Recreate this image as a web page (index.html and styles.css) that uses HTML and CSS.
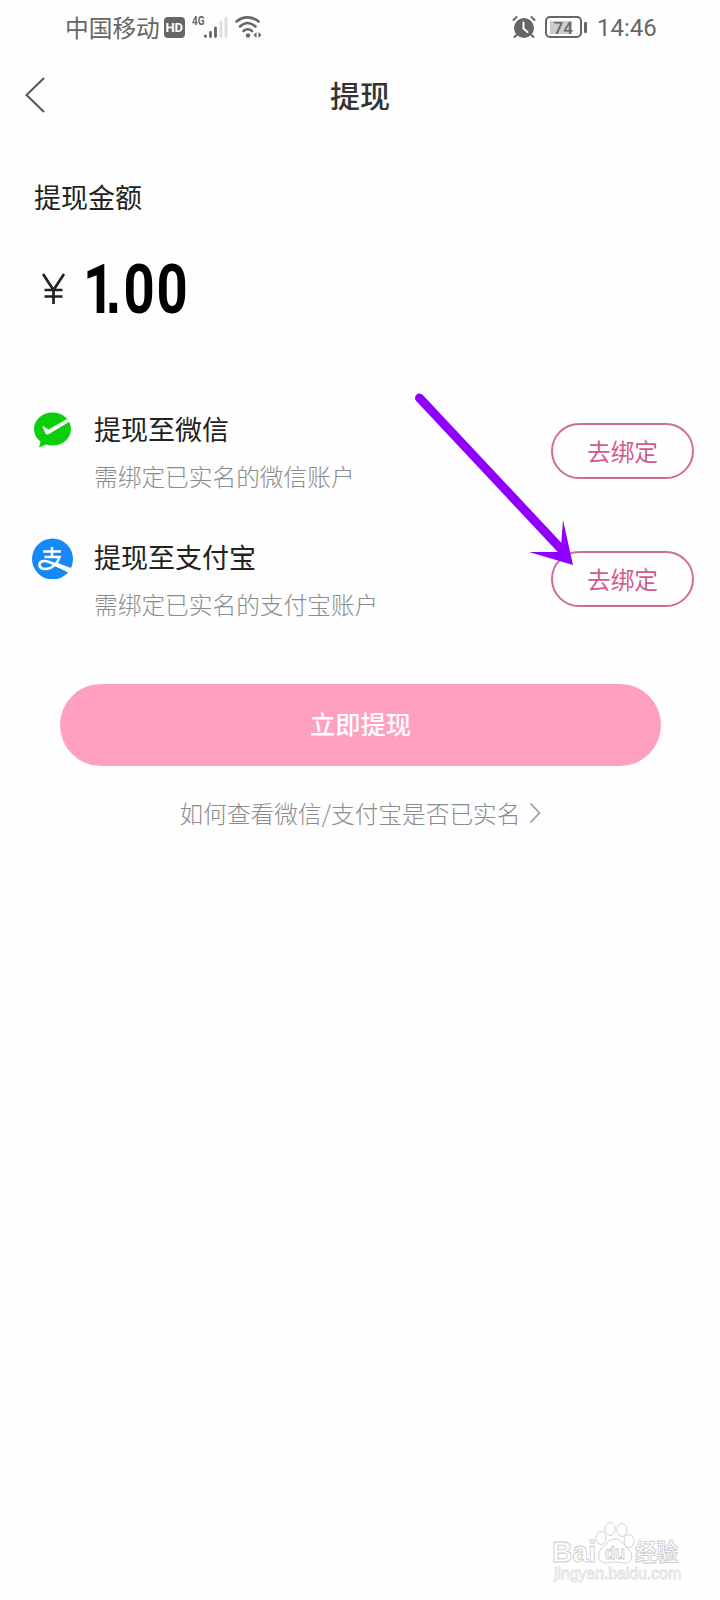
FILE: index.html
```html
<!DOCTYPE html>
<html lang="zh-CN">
<head>
<meta charset="utf-8">
<title>提现</title>
<link rel="stylesheet" href="styles.css">
</head>
<body>
<div class="screen">
  <header class="status">
    <span class="carrier">中国移动</span>
    <span class="hd">HD</span>
    <svg class="signal" width="38" height="26" viewBox="0 0 38 26">
      <text class="net" x="0" y="11" textLength="12.500" lengthAdjust="spacingAndGlyphs">4G</text>
      <g stroke-width="2.800" stroke-linecap="round" stroke="#666"><path d="M13.500 22v.5M18.500 18.500v4M23.500 14v8.500"/><path stroke="#ddd" d="M29 8v14.500M34 4v18.500"/></g>
    </svg>
    <svg class="wifi" width="30" height="26" viewBox="0 0 30 26" fill="none" stroke="#666" stroke-width="2.600" stroke-linecap="round">
      <path d="M2.500 7.500C9 2 18 2 24.500 7.500M6 12.500C11 8 16.500 8 21.500 12.500M9.500 17C12.500 14.500 15 14.500 18 17"/>
      <circle cx="14" cy="21.500" r="2.200" fill="#666" stroke="none"/>
      <path d="M22.500 18v6l-3-3zM24.500 18v6l3-3z" fill="#666" stroke="none"/>
    </svg>
    <svg class="alarm" width="24" height="24" viewBox="0 0 24 24" fill="none" stroke="#666" stroke-width="2" stroke-linecap="round">
      <circle cx="12" cy="13" r="10" fill="#666" stroke="none"/>
      <path d="M1.500 5L4.500 2M19.500 2L22.500 5M4.500 20L2.500 22M19.500 20L21.500 22"/>
      <path stroke="#fff" d="M11.500 7.500V13.500L15.500 17"/>
    </svg>
    <span class="battery"><span class="level">74</span></span>
    <i class="cap"></i>
    <span class="clock">14:46</span>
  </header>

  <nav class="nav">
    <svg class="back" width="22" height="38" viewBox="0 0 22 38" fill="none" stroke="#555" stroke-width="2"><path d="M20 1L2.500 18L20 35"/></svg>
    <h1 class="title">提现</h1>
  </nav>

  <section class="amount">
    <h2 class="label">提现金额</h2>
    <svg class="price" width="190" height="74" viewBox="0 0 190 74">
      <g fill="none" stroke="#222" stroke-width="2.700"><path d="M8 15L18.500 31L29 15M18.500 30V45M9.500 31H27.500M9.500 37.500H27.500"/></g>
      <text class="digits" transform="scale(.8 1)" y="54"><tspan x="60">1</tspan><tspan class="dot" x="88.500">.</tspan><tspan x="110.500 152">00</tspan></text>
    </svg>
  </section>

  <section class="methods">
    <div class="method">
      <svg class="logo" width="42" height="42" viewBox="0 0 42 42">
        <path fill="#0bcf0b" d="M21.500 3.500C11 3.500 3 11 3 20C3 25 5.500 29.500 9.500 32.500L8 38.500L15 35.500C17 36.300 19 36.500 21.500 36.500C32 36.500 40 29 40 20C40 11 32 3.500 21.500 3.500Z"/>
        <path fill="#fff" d="M11 16.500L17.500 20.500L36 10L38 13L18 25C16 26 14.500 25.500 14 23.500Z"/>
      </svg>
      <div class="info"><div class="name">提现至微信</div><div class="hint">需绑定已实名的微信账户</div></div>
      <button class="bind">去绑定</button>
    </div>
    <div class="method">
      <svg class="logo" width="42" height="42" viewBox="0 0 42 42">
        <circle cx="21.500" cy="22" r="20.500" fill="#1688f7"/>
        <path fill="none" stroke="#fff" stroke-width="2.600" d="M21 10V20M12 14.500H30M13.500 20H28.500C26.500 27 20.500 32 14.500 32C10.500 32 8.500 30 8.500 27.800C8.500 25.500 10.500 24 13.500 24C18 24 24 27.500 29 30"/>
        <path fill="#fff" d="M24 25L40 31L37 35.500L24 29Z"/>
      </svg>
      <div class="info"><div class="name">提现至支付宝</div><div class="hint">需绑定已实名的支付宝账户</div></div>
      <button class="bind">去绑定</button>
    </div>
    <svg class="arrow" width="162" height="176" viewBox="0 0 162 176" fill="#8f00ff">
      <path stroke="#8f00ff" stroke-width="9" stroke-linecap="round" d="M7.500 6L150 158"/>
      <path d="M161 173L151 128L149 155L146 160L117 160Z"/>
    </svg>
  </section>

  <button class="submit">立即提现</button>
  <a class="help">如何查看微信/支付宝是否已实名
    <svg class="more" width="12" height="22" viewBox="0 0 12 22" fill="none" stroke="#999" stroke-width="1.600"><path d="M1.500 1.500L10.500 11L1.500 20.500"/></svg>
  </a>

  <footer class="mark">
    <svg width="136" height="64" viewBox="0 0 136 64" fill="#fff" stroke="#ccc" stroke-width=".9">
      <text class="brand" x="2" y="41" textLength="44" lengthAdjust="spacingAndGlyphs">Bai</text>
      <ellipse cx="51" cy="17" rx="5" ry="6.500"/><ellipse cx="60" cy="8" rx="5" ry="6.500"/><ellipse cx="72" cy="9" rx="5" ry="6.500"/><ellipse cx="79" cy="20" rx="5" ry="6.500"/>
      <path d="M65 18C59 18 57 23 52 27C46 32 48 42 55 42C60 42 61 41 65 41C69 41 71 42 75 42C83 42 84 33 78 28C73 23 71 18 65 18Z"/>
      <text class="du" x="55" y="38" textLength="20" lengthAdjust="spacingAndGlyphs">du</text>
      <text class="exp" x="85" y="40" textLength="43" lengthAdjust="spacingAndGlyphs">经验</text>
      <text class="site" x="4" y="58" textLength="127" lengthAdjust="spacingAndGlyphs">jingyan.baidu.com</text>
    </svg>
  </footer>
</div>
</body>
</html>
```

FILE: styles.css
```css
* { box-sizing: border-box; }
body { margin: 0; background: #fff; }
.screen {
  width: 720px;
  height: 1600px;
  display: flex;
  flex-direction: column;
  position: relative;
  background: #fefefe;
  color: #222;
  font-family: "Noto Sans CJK SC", "Noto Sans", sans-serif;
  overflow: hidden;
}
h1, h2 { margin: 0; font-weight: 400; }
button { font-family: inherit; padding: 0; }
svg { display: block; flex: none; }

.status { height: 54px; display: flex; align-items: center; padding: 0 64px 0 65px; color: #666; }
.carrier { font-size: 23.700px; line-height: 34px; margin-top: -1px; }
.hd { width: 21px; height: 21px; margin-left: 4px; border-radius: 4px; background: #666; color: #fff; font: 700 13px/21px Roboto, sans-serif; text-align: center; }
.signal { margin-left: 7px; }
.net { font: 700 13px Roboto, sans-serif; fill: #666; }
.wifi { margin-left: 4px; }
.alarm { margin-left: auto; }
.battery { width: 37px; height: 22px; margin-left: 9px; padding: 2.500px; border: 2px solid #666; border-radius: 5px; }
.level { display: block; width: 22px; height: 13px; background: #ccc; font: 500 17px/14px Roboto, sans-serif; text-indent: 4px; white-space: nowrap; }
.cap { width: 3px; height: 11px; margin-left: 2px; border-radius: 1px; background: #666; }
.clock { width: 59px; margin: 2px 0 0 10px; font: 400 24px/30px Roboto, sans-serif; white-space: nowrap; }

.nav { height: 84px; display: grid; grid-template-columns: 60px 1fr 60px; align-items: center; }
.back { margin-left: 24px; }
.title { margin-top: -4px; font-size: 30px; line-height: 40px; text-align: center; font-weight: 500; color: #333; }

.amount { padding: 40px 33px 0 34px; height: 272px; }
.label { font-size: 27px; line-height: 38px; }
.price { margin: 43px 0 0 1px; }
.digits { font: 700 68px Roboto, sans-serif; fill: #000; }
.dot { font-family: "Liberation Sans", sans-serif; }

.methods { position: relative; height: 256px; }
.method { height: 128px; display: flex; padding: 0 26px 0 31px; }
.logo { margin-top: -1px; }
.info { flex: 1; margin: -1px 0 0 21px; }
.name { font-size: 27px; line-height: 40px; }
.hint { margin-top: 9px; font-size: 23.700px; line-height: 36px; font-weight: 300; color: #8c8c8c; }
.bind { width: 143px; height: 56px; margin-top: 13px; border: 2px solid #d36b96; border-radius: 28px; background: transparent; color: #cf5c8b; font-size: 23.700px; line-height: 50px; }
.arrow { position: absolute; left: 412px; top: -18px; }

.submit { width: 601px; height: 82px; margin: 18px 0 0 60px; border: 0; border-radius: 41px; background: #ffa0c1; color: #fff; font-size: 25.300px; font-weight: 500; line-height: 76px; padding-bottom: 4px; }
.help { margin: 29px 0 0 1px; display: flex; align-items: center; justify-content: center; gap: 9px; font-size: 23.700px; line-height: 36px; font-weight: 300; color: #8c8c8c; }

.mark { margin: auto 34px 15px auto; }
.brand { font: 700 30px "Liberation Sans", sans-serif; }
.du { font: 700 18px "Liberation Sans", sans-serif; }
.exp { font: 700 24px "Noto Sans CJK SC", sans-serif; }
.site { font: 400 16px "Liberation Sans", sans-serif; stroke: #e2e2e2; }
```
